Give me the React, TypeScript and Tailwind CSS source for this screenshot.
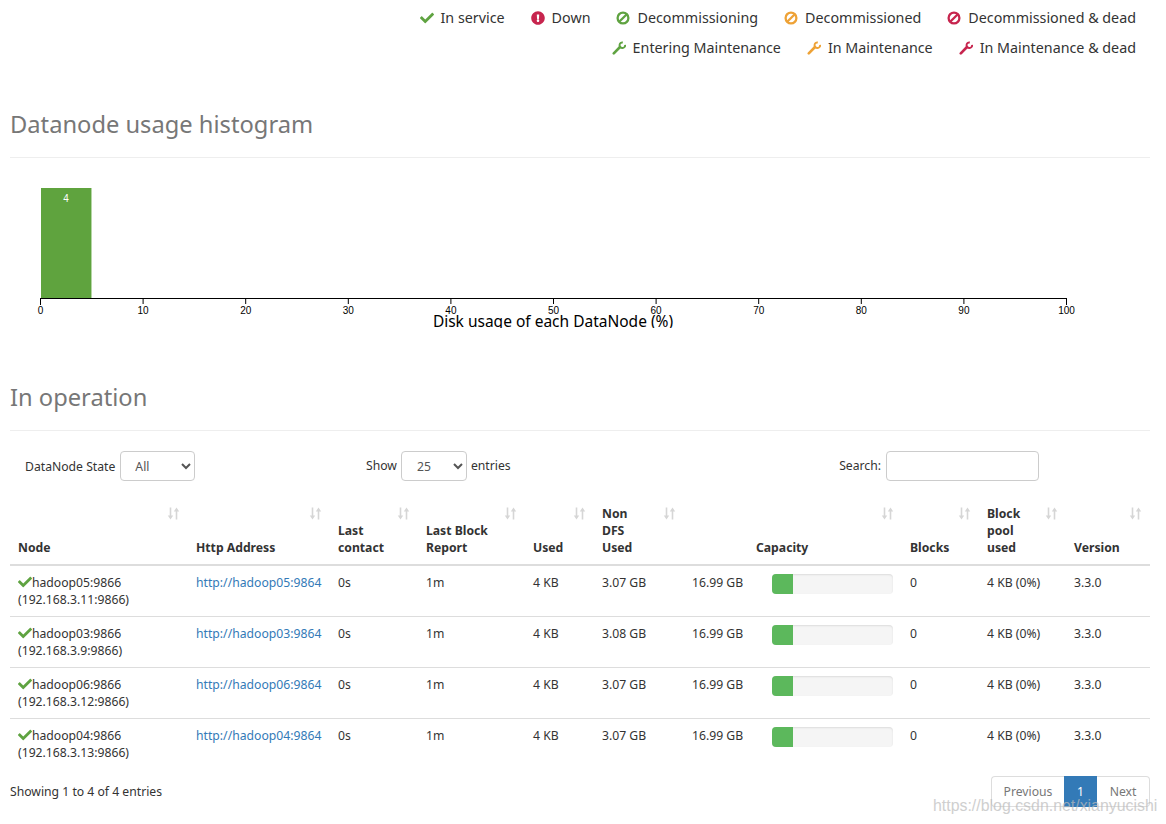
import { FaCheck, FaExclamationCircle } from 'react-icons/fa';

const green = 'text-[#5fa341]';
const red = 'text-[#c7254e]';
const orange = 'text-[#eea236]';

function BanIcon({ color }: { color: string }) {
  return (
    <svg viewBox="0 0 14 14" className={`h-[14px] w-[14px] ${color}`} fill="none" stroke="currentColor" strokeWidth="2.3">
      <circle cx="7" cy="7" r="5.4" />
      <path d="M3.2 10.8L10.8 3.2" />
    </svg>
  );
}

function WrenchIcon({ color }: { color: string }) {
  return (
    <svg viewBox="0 0 14 14" className={`h-[14px] w-[14px] ${color}`} fill="none" stroke="currentColor">
      <path d="M1.8 12.4L8 6" strokeWidth="2.6" strokeLinecap="round" />
      <path d="M10.8 1.5A2.8 2.8 0 1 0 13.1 3.8" strokeWidth="1.9" />
    </svg>
  );
}

function Legend({ icon, color, label }: { icon: 'ok' | 'down' | 'ban' | 'wrench'; color: string; label: string }) {
  return (
    <span className="flex items-center gap-[7px] text-[14.3px] leading-[20px] text-[#333]">
      {icon === 'ok' && <FaCheck className={`h-[14px] w-[14px] ${color}`} />}
      {icon === 'down' && <FaExclamationCircle className={`h-[14px] w-[14px] ${color}`} />}
      {icon === 'ban' && <BanIcon color={color} />}
      {icon === 'wrench' && <WrenchIcon color={color} />}
      {label}
    </span>
  );
}

function SortIcon() {
  return (
    <svg viewBox="0 0 13 13" className="absolute top-[7px] right-[8px] h-[13px] w-[13px] text-[#d6d6d6]" fill="currentColor" stroke="none">
      <path d="M2.7 0.5H4.3V8.5H6.2L3.5 12.5L0.8 8.5H2.7Z" />
      <path d="M8.7 12.5H10.3V4.5H12.2L9.5 0.5L6.8 4.5H8.7Z" />
    </svg>
  );
}

function Histogram() {
  const ticks = [0, 10, 20, 30, 40, 50, 60, 70, 80, 90, 100];
  return (
    <svg width="1140" height="158" className="block">
      <rect x="31" y="18" width="50" height="110" fill="#5fa33e" />
      <rect x="81" y="18" width="1" height="110" fill="#b5d6a5" />
      <text x="56" y="32" textAnchor="middle" fontSize="10" fill="#fff" fontFamily="'Liberation Sans', sans-serif">4</text>
      <path d="M30.5 135V128.5H1056.5V135" fill="none" stroke="#000" />
      {ticks.map((t) => (
        <g key={t}>
          <line x1={30.5 + t * 10.26} x2={30.5 + t * 10.26} y1="128" y2="134" stroke="#000" />
          <text x={30.5 + t * 10.26} y="144" textAnchor="middle" fontSize="10" fill="#000" fontFamily="'Liberation Sans', sans-serif">{t}</text>
        </g>
      ))}
      <text x="543" y="157" textAnchor="middle" fontSize="15.5" fill="#000" fontFamily="'Noto Sans', sans-serif">Disk usage of each DataNode (%)</text>
    </svg>
  );
}

const rows = [
  { host: 'hadoop05', ip: '192.168.3.11', nonDfs: '3.07 GB' },
  { host: 'hadoop03', ip: '192.168.3.9', nonDfs: '3.08 GB' },
  { host: 'hadoop06', ip: '192.168.3.12', nonDfs: '3.07 GB' },
  { host: 'hadoop04', ip: '192.168.3.13', nonDfs: '3.07 GB' },
];

const th = 'relative align-bottom text-left font-bold px-2 pt-[5px] pb-[8px]';
const td = 'align-top px-2 pt-[8px] pb-[8px] border-t border-[#ddd]';

export default function App() {
  return (
    <div className="relative h-[824px] overflow-hidden bg-white pr-[16px] pl-[10px] font-['Noto_Sans',sans-serif] text-[12.2px] leading-[17px] text-[#333]">
      {/* legend */}
      <div className="flex flex-col items-end gap-[10px] pt-[8px] pr-[14px]">
        <div className="flex gap-[26px]">
          <Legend icon="ok" color={green} label="In service" />
          <Legend icon="down" color={red} label="Down" />
          <Legend icon="ban" color={green} label="Decommissioning" />
          <Legend icon="ban" color={orange} label="Decommissioned" />
          <Legend icon="ban" color={red} label="Decommissioned & dead" />
        </div>
        <div className="flex gap-[26px]">
          <Legend icon="wrench" color={green} label="Entering Maintenance" />
          <Legend icon="wrench" color={orange} label="In Maintenance" />
          <Legend icon="wrench" color={red} label="In Maintenance & dead" />
        </div>
      </div>

      <h2 className="mt-[49px] border-b border-[#eee] pb-[16px] text-[23.7px] leading-[34px] font-normal text-[#777]">Datanode usage histogram</h2>
      <div className="pt-[12px]">
        <Histogram />
      </div>

      <h2 className="mt-[52px] border-b border-[#eee] pb-[16px] text-[23.7px] leading-[34px] font-normal text-[#777]">In operation</h2>

      {/* filters */}
      <div className="mt-[20px] flex h-[30px] items-center">
        <div className="flex w-[356px] items-center gap-[5px] pl-[15px]">
          <span>DataNode State</span>
          <select className="h-[30px] w-[75px] rounded-[4px] border border-[#ccc] bg-white pl-[10px] text-[#555]">
            <option>All</option>
          </select>
        </div>
        <div className="flex items-center gap-[4px]">
          <span className="mb-[2px]">Show</span>
          <select className="h-[30px] w-[66px] rounded-[4px] border border-[#ccc] bg-white pl-[11px] text-[#555]">
            <option>25</option>
          </select>
          <span className="mb-[2px]">entries</span>
        </div>
        <div className="ml-auto flex items-center gap-[5px] pr-[111px]">
          <span className="mb-[2px]">Search:</span>
          <input className="h-[30px] w-[153px] rounded-[4px] border border-[#ccc] bg-white" />
        </div>
      </div>

      {/* datanode table */}
      <table className="mt-[19px] w-[1140px] table-fixed border-collapse">
        <colgroup>
          <col className="w-[178px]" />
          <col className="w-[142px]" />
          <col className="w-[88px]" />
          <col className="w-[107px]" />
          <col className="w-[69px]" />
          <col className="w-[90px]" />
          <col className="w-[218px]" />
          <col className="w-[77px]" />
          <col className="w-[87px]" />
          <col className="w-[84px]" />
        </colgroup>
        <thead>
          <tr className="border-b-2 border-[#ddd]">
            <th className={th}>Node<SortIcon /></th>
            <th className={th}>Http Address<SortIcon /></th>
            <th className={th}>Last contact<SortIcon /></th>
            <th className={th}>Last Block Report<SortIcon /></th>
            <th className={th}>Used<SortIcon /></th>
            <th className={th}>Non<br />DFS<br />Used<SortIcon /></th>
            <th className={`${th} pl-[72px]`}>Capacity<SortIcon /></th>
            <th className={th}>Blocks<SortIcon /></th>
            <th className={th}>Block<br />pool<br />used<SortIcon /></th>
            <th className={th}>Version<SortIcon /></th>
          </tr>
        </thead>
        <tbody>
          {rows.map((r) => (
            <tr key={r.host}>
              <td className={td}>
                <div className="h-[17px] whitespace-nowrap">
                  <FaCheck className={`mb-[3px] inline h-[14px] w-[14px] ${green}`} />
                  {r.host}:9866
                </div>
                ({r.ip}:9866)
              </td>
              <td className={td}><a className="whitespace-nowrap text-[#337ab7]">http://{r.host}:9864</a></td>
              <td className={td}>0s</td>
              <td className={td}>1m</td>
              <td className={td}>4 KB</td>
              <td className={td}>{r.nonDfs}</td>
              <td className={td}>
                <div className="flex items-start">
                  <span className="w-[80px] shrink-0">16.99 GB</span>
                  <div className="h-[20px] w-[121px] overflow-hidden rounded-[4px] bg-[#f5f5f5] shadow-[inset_0_1px_2px_rgba(0,0,0,0.1)]">
                    <div className="h-full w-[21px] bg-[#5cb85c]" />
                  </div>
                </div>
              </td>
              <td className={td}>0</td>
              <td className={td}>4 KB (0%)</td>
              <td className={td}>3.3.0</td>
            </tr>
          ))}
        </tbody>
      </table>

      {/* footer */}
      <div className="mt-[7px] flex items-center justify-between">
        <span>Showing 1 to 4 of 4 entries</span>
        <div className="flex h-[31px] text-[#777]">
          <span className="flex w-[73px] items-center justify-center rounded-l-[4px] border border-r-0 border-[#ddd]">Previous</span>
          <span className="flex w-[33px] items-center justify-center bg-[#337ab7] text-white">1</span>
          <span className="flex w-[53px] items-center justify-center rounded-r-[4px] border border-l-0 border-[#ddd]">Next</span>
        </div>
      </div>

      {/* csdn watermark */}
      <span className="absolute top-[796px] left-[933px] font-['Liberation_Sans',sans-serif] text-[15.9px] leading-[20px] whitespace-nowrap text-[#bbb] opacity-70">https://blog.csdn.net/xianyucishi</span>
    </div>
  );
}
